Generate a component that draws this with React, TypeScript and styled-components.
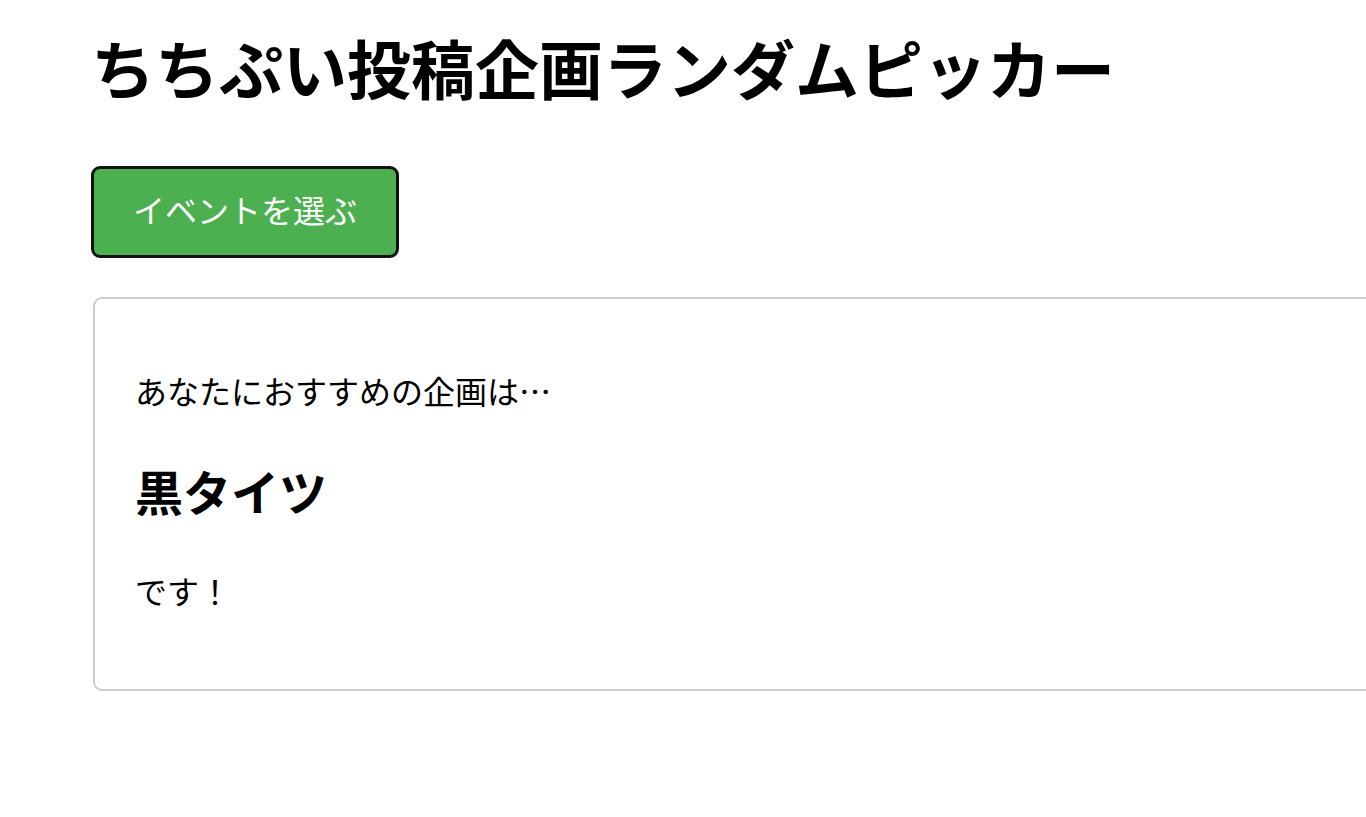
import React from "react"
import styled, { createGlobalStyle } from "styled-components"

const GlobalStyle = createGlobalStyle`
  html, body {
    margin: 0;
    padding: 0;
    background-color: #ffffff;
    overflow-x: hidden;
  }

  body {
    font-family: "Noto Sans CJK JP", "Noto Sans", sans-serif;
    color: #000000;
  }
`

const SPage = styled.main`
  display: flex;
  flex-direction: column;
  align-items: flex-start;
  padding: 18px 0 40px 91px;
`

const STitle = styled.h1`
  margin: 0 0 52px 0;
  font-size: 64px;
  line-height: 96px;
  font-weight: 700;
  white-space: nowrap;
`

const SPickButton = styled.button`
  padding: 16px 39px 22px;
  margin-bottom: 39px;
  font-family: inherit;
  font-size: 32px;
  line-height: 48px;
  color: #ffffff;
  background-color: #4caf50;
  border: 3px solid #111111;
  border-radius: 9px;
  cursor: pointer;
`

const SResultCard = styled.section`
  width: 1400px;
  margin-left: 2px;
  padding: 35px 40px 43px;
  border: 2px solid #cccccc;
  border-radius: 9px;
`

const SText = styled.p`
  margin: 32px 0;
  font-size: 32px;
  line-height: 48px;
`

const SEventName = styled.h2`
  margin: 40px 0;
  font-size: 48px;
  line-height: 72px;
  font-weight: 700;
`

const App = () => {
  return (
    <SPage>
      <GlobalStyle />
      <STitle>ちちぷい投稿企画ランダムピッカー</STitle>
      <SPickButton>イベントを選ぶ</SPickButton>
      <SResultCard>
        <SText>あなたにおすすめの企画は…</SText>
        <SEventName>黒タイツ</SEventName>
        <SText>です！</SText>
      </SResultCard>
    </SPage>
  )
}

export default App
